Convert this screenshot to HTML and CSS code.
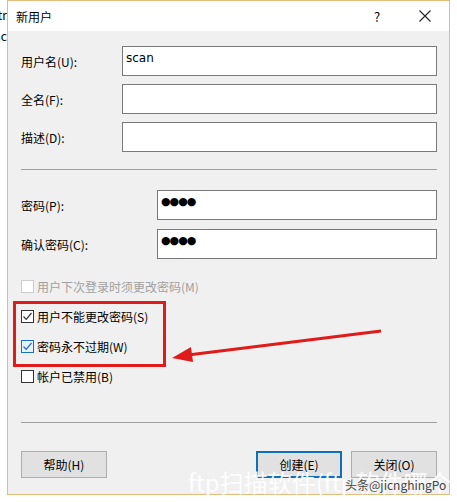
FILE: index.html
```html
<!DOCTYPE html>
<html lang="zh-CN">
<head>
    <meta charset="UTF-8">
    <title>新用户</title>
    <link rel="stylesheet" href="styles.css">
</head>
<body>
    <div class="desktop">
        <!-- janela de trás, só aparece uma tira -->
        <div class="behind">
            <span>Distr</span>
            <span>Interac</span>
        </div>

        <div class="dialog">
            <div class="titlebar">
                <span class="title">新用户</span>
                <span class="help-btn">?</span>
                <span class="close-btn">
                    <svg width="12" height="12" viewBox="0 0 12 12"><path d="M0.5 0.5 L11.5 11.5 M11.5 0.5 L0.5 11.5" stroke="#222" stroke-width="1.1" fill="none"/></svg>
                </span>
            </div>

            <div class="content">
                <div class="form-grid names">
                    <label>用户名(U):</label>
                    <div class="field">scan</div>
                    <label>全名(F):</label>
                    <div class="field"></div>
                    <label>描述(D):</label>
                    <div class="field"></div>
                </div>

                <div class="sep"></div>

                <div class="form-grid passwords">
                    <label>密码(P):</label>
                    <div class="field dots">●●●●</div>
                    <label>确认密码(C):</label>
                    <div class="field dots">●●●●</div>
                </div>

                <div class="checks">
                    <div class="check disabled"><span class="box"></span>用户下次登录时须更改密码(M)</div>
                    <div class="check"><span class="box checked">
                        <svg width="11" height="11" viewBox="0 0 11 11"><path d="M1.5 5.5 L4.2 8.3 L9.5 2" stroke="#333" stroke-width="1.2" fill="none"/></svg>
                    </span>用户不能更改密码(S)</div>
                    <div class="check"><span class="box checked hot">
                        <svg width="11" height="11" viewBox="0 0 11 11"><path d="M1.5 5.5 L4.2 8.3 L9.5 2" stroke="#1a6fc0" stroke-width="1.2" fill="none"/></svg>
                    </span>密码永不过期(W)</div>
                    <div class="check"><span class="box"></span>帐户已禁用(B)</div>
                </div>

                <div class="sep bottom-sep"></div>

                <div class="buttons">
                    <button>帮助(H)</button>
                    <span class="spacer"></span>
                    <button class="default">创建(E)</button>
                    <button>关闭(O)</button>
                </div>
            </div>
        </div>

        <!-- marcação vermelha e marca d'água por cima -->
        <div class="red-box"></div>
        <svg class="arrow" width="457" height="502" viewBox="0 0 457 502">
            <line x1="381" y1="331" x2="188" y2="355" stroke="#e01b1b" stroke-width="3"/>
            <polygon points="172,358 191,347 193,362" fill="#e01b1b"/>
        </svg>
        <div class="watermark">ftp扫描软件(ftp软件哪个好用)</div>
        <div class="watermark-small">头条@jicnghingPo</div>
    </div>
</body>
</html>
```

FILE: styles.css
```css
body {
    margin: 0;
    padding: 0;
    background-color: #ffffff;
    font-family: "Noto Sans CJK SC", "Noto Sans", sans-serif;
    font-size: 12px;
    color: #000;
}
.desktop {
    position: relative;
    width: 457px;
    height: 502px;
    overflow: hidden;
    display: flex;
    align-items: flex-start;
}
.behind {
    width: 7px;
    overflow: hidden;
    display: flex;
    flex-direction: column;
    align-items: flex-end;
    padding-top: 7px;
    gap: 6px;
    font-size: 12px;
    line-height: 15px;
    white-space: nowrap;
}
.dialog {
    width: 443px;
    height: 495px;
    box-sizing: border-box;
    border: 1px solid #e3bd7c;
    display: flex;
    flex-direction: column;
    background: #f0f0f0;
}
.titlebar {
    height: 30px;
    background: #ffffff;
    display: flex;
    align-items: center;
    padding: 0 0 0 8px;
    flex-shrink: 0;
}
.title {
    font-size: 12px;
    flex: 1;
}
.help-btn {
    width: 14px;
    font-size: 13px;
    margin-right: 31px;
}
.close-btn {
    display: flex;
    margin-right: 18px;
}
.content {
    flex: 1;
    padding: 15px 12px 0 13px;
    display: flex;
    flex-direction: column;
}
.form-grid {
    display: grid;
    align-items: center;
}
.names {
    grid-template-columns: 101px 1fr;
    row-gap: 8px;
}
.passwords {
    grid-template-columns: 136px 1fr;
    row-gap: 9px;
    margin-top: 20px;
}
.form-grid label {
    font-size: 12px;
}
.field {
    height: 30px;
    box-sizing: border-box;
    background: #ffffff;
    border: 1px solid #7a7a7a;
    padding: 2px 3px;
    font-family: "DejaVu Sans", sans-serif;
    font-size: 12px;
    line-height: 18px;
}
.field.dots {
    font-size: 11px;
    letter-spacing: -1px;
}
.sep {
    height: 1px;
    background: #a0a0a0;
    margin-top: 17px;
}
.checks {
    display: flex;
    flex-direction: column;
    gap: 10px;
    margin-top: 17px;
}
.check {
    height: 20px;
    display: flex;
    align-items: center;
    gap: 3px;
}
.check.disabled {
    color: #a0a0a0;
}
.box {
    width: 13px;
    height: 13px;
    box-sizing: border-box;
    border: 1px solid #333;
    background: #fff;
    display: flex;
    align-items: center;
    justify-content: center;
}
.disabled .box {
    border-color: #cccccc;
}
.box.hot {
    border-color: #1a6fc0;
    background: #e5f1fb;
}
.bottom-sep {
    margin-top: 36px;
}
.buttons {
    display: flex;
    gap: 9px;
    margin-top: 28px;
}
.spacer {
    flex: 1;
}
button {
    width: 86px;
    height: 27px;
    background: #e1e1e1;
    border: 1px solid #adadad;
    font-family: "Noto Sans CJK SC", sans-serif;
    font-size: 12px;
    padding: 0;
    color: #000;
}
button.default {
    border: 2px solid #0f6fb8;
}
.red-box {
    position: absolute;
    left: 13px;
    top: 301px;
    width: 153px;
    height: 66px;
    box-sizing: border-box;
    border: 3px solid #e01b1b;
}
.arrow {
    position: absolute;
    left: 0;
    top: 0;
}
.watermark {
    position: absolute;
    left: 188px;
    top: 467px;
    font-size: 24px;
    line-height: 30px;
    color: rgba(255, 255, 255, 0.92);
    white-space: nowrap;
}
.watermark-small {
    position: absolute;
    left: 345px;
    top: 476px;
    font-size: 12px;
    color: #444;
    white-space: nowrap;
}
```
